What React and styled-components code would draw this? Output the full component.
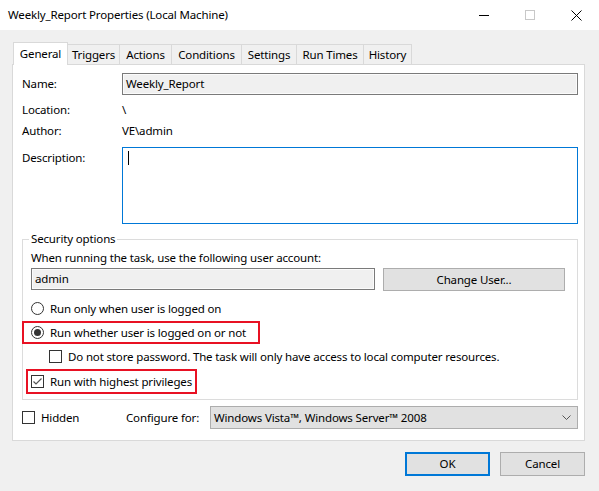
import React from 'react';
import styled, { createGlobalStyle } from 'styled-components';

const GlobalStyle = createGlobalStyle`
    html, body {
        margin: 0;
        padding: 0;
        background: #f0f0f0;
    }
    body {
        font-family: "Noto Sans", "Open Sans", sans-serif;
        font-size: 11.5px;
        letter-spacing: -0.15px;
        color: #000;
    }
    * {
        box-sizing: border-box;
    }
`;

const Window = styled.div`
    width: 599px;
    height: 491px;
    background: #f0f0f0;
    display: flex;
    flex-direction: column;
    overflow: hidden;
`;

const TitleBar = styled.div`
    height: 30px;
    background: #fff;
    display: flex;
    align-items: center;
    justify-content: space-between;
    padding-left: 8px;
`;

const Title = styled.span`
    line-height: 16px;
`;

const Controls = styled.div`
    display: flex;
    height: 100%;
`;

const CaptionButton = styled.div`
    width: 46px;
    height: 30px;
    display: flex;
    align-items: center;
    justify-content: center;
`;

const Content = styled.div`
    flex: 1;
    display: flex;
    flex-direction: column;
    padding: 12px 14px 0 12px;
`;

const TabStrip = styled.div`
    display: flex;
    align-items: flex-end;
    height: 22px;
    padding-left: 1px;
`;

const Tab = styled.div`
    position: relative;
    width: ${p => p.w}px;
    height: ${p => (p.active ? '23px' : '20px')};
    margin-bottom: ${p => (p.active ? '-1px' : '0')};
    margin-left: ${p => (p.first ? '0' : '-1px')};
    padding-bottom: ${p => (p.active ? '2px' : '0')};
    background: ${p => (p.active ? '#fff' : '#f0f0f0')};
    border: 1px solid #d9d9d9;
    border-bottom: none;
    display: flex;
    align-items: center;
    justify-content: center;
    white-space: nowrap;
    z-index: ${p => (p.active ? 1 : 0)};
`;

const Panel = styled.div`
    background: #fff;
    border: 1px solid #d9d9d9;
    padding: 8px 6px 11px 9px;
    display: flex;
    flex-direction: column;
`;

const Field = styled.div`
    display: grid;
    grid-template-columns: 100px 1fr;
    align-items: ${p => (p.top ? 'start' : 'center')};
    min-height: ${p => p.h || 20}px;
    margin-top: ${p => p.mt || 0}px;
`;

const Label = styled.span`
    line-height: 16px;
    padding-top: ${p => p.pt || 0}px;
`;

const ReadOnlyInput = styled.div`
    height: 22px;
    border: 1px solid #7a7a7a;
    background: #f0f0f0;
    box-shadow: inset 0 0 0 1px #fbfbfb;
    padding: 0 3px;
    display: flex;
    align-items: center;
    line-height: 16px;
    width: ${p => p.w || 'auto'};
`;

const TextArea = styled.div`
    height: 77px;
    border: 1px solid #0078d7;
    background: #fff;
    padding: 3px 5px;
`;

const Caret = styled.span`
    display: block;
    width: 1px;
    height: 14px;
    background: #000;
`;

const Group = styled.fieldset`
    margin: 7px 0 0;
    border: 1px solid #dcdcdc;
    padding: 0 8px 5px;
    min-width: 0;
`;

const Legend = styled.legend`
    padding: 0 2px;
    margin-left: -2px;
    line-height: 16px;
`;

const Line = styled.div`
    line-height: 16px;
    margin-top: ${p => p.mt || 0}px;
`;

const AccountRow = styled.div`
    display: flex;
    gap: 8px;
    margin-top: 2px;
`;

const Button = styled.div`
    width: ${p => p.w}px;
    height: ${p => p.h || 23}px;
    background: #e1e1e1;
    border: ${p => (p.primary ? '2px solid #0078d7' : '1px solid #adadad')};
    display: flex;
    align-items: center;
    justify-content: center;
    line-height: 16px;
`;

const Option = styled.div`
    display: flex;
    align-items: center;
    height: 16px;
    width: ${p => (p.w ? `${p.w}px` : 'auto')};
    flex-shrink: 0;
    margin-top: ${p => p.mt || 0}px;
    margin-left: ${p => p.ml || 0}px;
    gap: ${p => p.gap || 6}px;
    white-space: nowrap;
`;

const Highlight = styled.div`
    align-self: flex-start;
    width: fit-content;
    border: 2px solid #e81123;
    margin-top: ${p => p.mt || 0}px;
    margin-left: ${p => p.ml}px;
    padding: ${p => p.pad};
`;

const RadioCircle = styled.span`
    width: 13px;
    height: 13px;
    border-radius: 50%;
    border: 1px solid #333;
    background: #fff;
    display: flex;
    align-items: center;
    justify-content: center;
    flex-shrink: 0;

    &::after {
        content: '';
        display: ${p => (p.checked ? 'block' : 'none')};
        width: 7px;
        height: 7px;
        border-radius: 50%;
        background: #333;
    }
`;

const Box = styled.span`
    width: 13px;
    height: 13px;
    border: 1px solid #333;
    background: #fff;
    display: flex;
    align-items: center;
    justify-content: center;
    flex-shrink: 0;
`;

const BottomRow = styled.div`
    display: flex;
    align-items: center;
    margin-top: 6px;
`;

const ConfigLabel = styled.span`
    width: 84px;
    flex-shrink: 0;
    line-height: 16px;
`;

const Select = styled.div`
    flex: 1;
    height: 23px;
    background: #e1e1e1;
    border: 1px solid #adadad;
    display: flex;
    align-items: center;
    justify-content: space-between;
    padding: 0 6px 0 3px;
    line-height: 16px;
`;

const Footer = styled.div`
    display: flex;
    justify-content: flex-end;
    gap: 10px;
    margin-top: 11px;
`;

const Radio = ({ checked, children }) => (
    <>
        <RadioCircle checked={checked} />
        <span>{children}</span>
    </>
);

const Check = ({ checked, children }) => (
    <>
        <Box>
            {checked && (
                <svg width="11" height="11" viewBox="0 0 11 11">
                    <path d="M1.5 5.5 L4 8 L9.5 2.5" fill="none" stroke="#555" strokeWidth="1.2" />
                </svg>
            )}
        </Box>
        <span>{children}</span>
    </>
);

const tabs = [
    { name: 'General', w: 55 },
    { name: 'Triggers', w: 53 },
    { name: 'Actions', w: 53 },
    { name: 'Conditions', w: 71 },
    { name: 'Settings', w: 56 },
    { name: 'Run Times', w: 68 },
    { name: 'History', w: 49 },
];

export default function App() {
    return (
        <Window>
            <GlobalStyle />
            <TitleBar>
                <Title>Weekly_Report Properties (Local Machine)</Title>
                <Controls>
                    <CaptionButton>
                        <svg width="10" height="10" viewBox="0 0 10 10">
                            <path d="M0 5.5 H10" stroke="#000" strokeWidth="1" />
                        </svg>
                    </CaptionButton>
                    <CaptionButton>
                        <svg width="10" height="10" viewBox="0 0 10 10">
                            <rect x="0.5" y="0.5" width="9" height="9" fill="none" stroke="#c8c8c8" strokeWidth="1" />
                        </svg>
                    </CaptionButton>
                    <CaptionButton>
                        <svg width="11" height="11" viewBox="0 0 11 11">
                            <path d="M0.5 0.5 L10.5 10.5 M10.5 0.5 L0.5 10.5" stroke="#000" strokeWidth="1" />
                        </svg>
                    </CaptionButton>
                </Controls>
            </TitleBar>

            <Content>
                <TabStrip>
                    {tabs.map((t, i) => (
                        <Tab key={t.name} w={t.w} active={i === 0} first={i === 0}>{t.name}</Tab>
                    ))}
                </TabStrip>

                <Panel>
                    <Field h={22}>
                        <Label>Name:</Label>
                        <ReadOnlyInput>Weekly_Report</ReadOnlyInput>
                    </Field>
                    <Field mt={5}>
                        <Label>Location:</Label>
                        <Label>\</Label>
                    </Field>
                    <Field mt={1}>
                        <Label>Author:</Label>
                        <Label>VE\admin</Label>
                    </Field>
                    <Field mt={6} top>
                        <Label pt={3}>Description:</Label>
                        <TextArea><Caret /></TextArea>
                    </Field>

                    <Group>
                        <Legend>Security options</Legend>
                        <Line mt={3}>When running the task, use the following user account:</Line>
                        <AccountRow>
                            <ReadOnlyInput w="344px">admin</ReadOnlyInput>
                            <Button w={182}>Change User...</Button>
                        </AccountRow>
                        <Option mt={9}>
                            <Radio>Run only when user is logged on</Radio>
                        </Option>
                        <Highlight mt={5} ml={-9} pad="1px 12px 2px 7px">
                            <Option>
                                <Radio checked>Run whether user is logged on or not</Radio>
                            </Option>
                        </Highlight>
                        <Option mt={4} ml={18}>
                            <Check>Do not store password. The task will only have access to local computer resources.</Check>
                        </Option>
                        <Highlight mt={5} ml={-5} pad="2px 3px 3px 3px">
                            <Option>
                                <Check checked>Run with highest privileges</Check>
                            </Option>
                        </Highlight>
                    </Group>

                    <BottomRow>
                        <Option w={104}>
                            <Check>Hidden</Check>
                        </Option>
                        <ConfigLabel>Configure for:</ConfigLabel>
                        <Select>
                            <span>Windows Vista™, Windows Server™ 2008</span>
                            <svg width="9" height="5" viewBox="0 0 9 5">
                                <path d="M0.5 0.5 L4.5 4.5 L8.5 0.5" fill="none" stroke="#555" strokeWidth="1" />
                            </svg>
                        </Select>
                    </BottomRow>
                </Panel>

                <Footer>
                    <Button w={85} h={24} primary>OK</Button>
                    <Button w={85} h={24}>Cancel</Button>
                </Footer>
            </Content>
        </Window>
    );
}
